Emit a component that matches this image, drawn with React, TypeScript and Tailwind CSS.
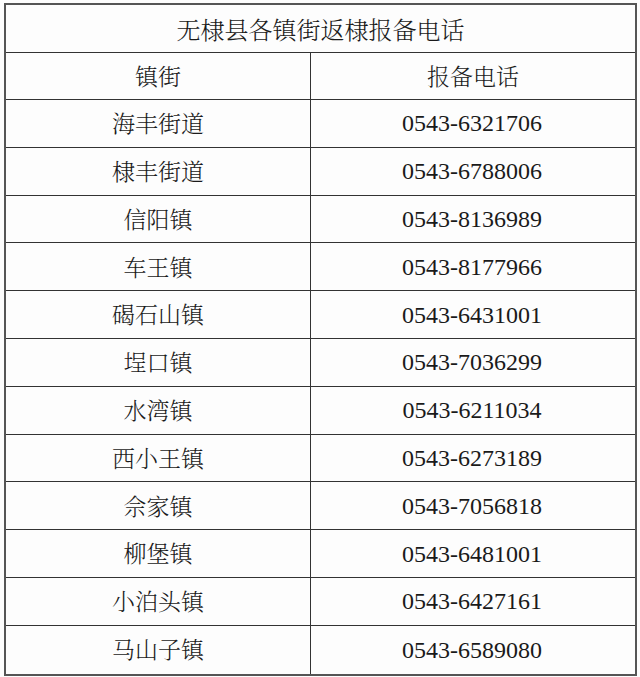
const rows: [string, string][] = [
  ["海丰街道", "0543-6321706"],
  ["棣丰街道", "0543-6788006"],
  ["信阳镇", "0543-8136989"],
  ["车王镇", "0543-8177966"],
  ["碣石山镇", "0543-6431001"],
  ["埕口镇", "0543-7036299"],
  ["水湾镇", "0543-6211034"],
  ["西小王镇", "0543-6273189"],
  ["佘家镇", "0543-7056818"],
  ["柳堡镇", "0543-6481001"],
  ["小泊头镇", "0543-6427161"],
  ["马山子镇", "0543-6589080"],
];

const cjk = "font-['Noto_Serif_CJK_SC','Noto_Sans_CJK_SC',serif] font-light text-[23px] text-[#1a1a1a]";
const num = "font-['Liberation_Serif',serif] text-[24px] text-[#1a1a1a]";

export default function App() {
  return (
    <div className="w-[640px] h-[677px] bg-[#fdfdfd] pt-[3px] pl-[4px]">
      <div className="w-[633px] border-2 border-[#555]">
        <div className={`h-[48px] flex items-center justify-center border-b border-[#333] ${cjk} text-[24px]`}>
          无棣县各镇街返棣报备电话
        </div>
        <div className="h-[47px] flex border-b border-[#333]">
          <div className={`w-[305px] flex items-center justify-center border-r border-[#333] ${cjk}`}>镇街</div>
          <div className={`flex-1 flex items-center justify-center ${cjk}`}>报备电话</div>
        </div>
        {rows.map(([town, phone], i) => (
          <div
            key={town}
            className={`h-[47.8px] flex ${i < rows.length - 1 ? "border-b border-[#333]" : ""}`}
          >
            <div className={`w-[305px] flex items-center justify-center border-r border-[#333] ${cjk}`}>{town}</div>
            <div className={`flex-1 flex items-center justify-center pr-[2px] ${num}`}>{phone}</div>
          </div>
        ))}
      </div>
    </div>
  );
}
